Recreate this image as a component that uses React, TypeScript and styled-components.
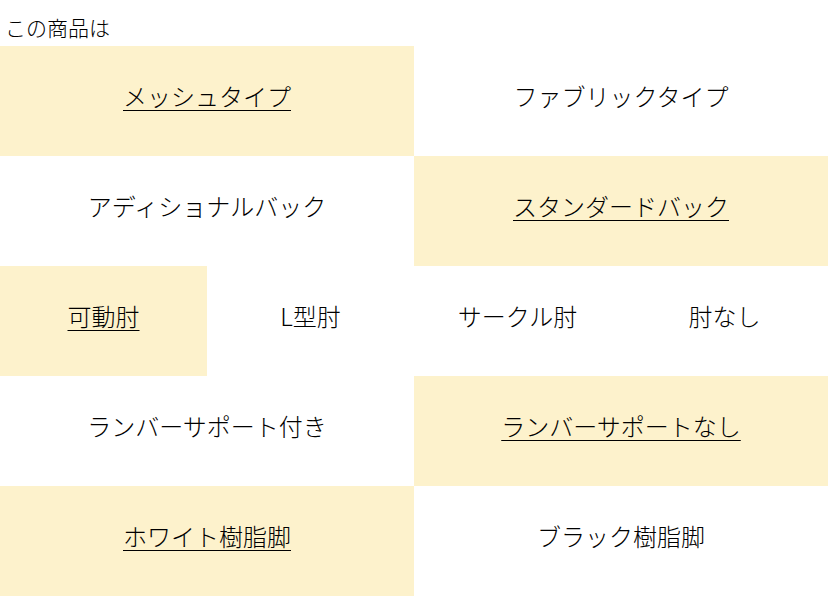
import styled, { createGlobalStyle } from 'styled-components';

const GlobalStyle = createGlobalStyle`
  html, body {
    margin: 0;
    padding: 0;
    background: #fff;
  }
  body {
    font-family: "Noto Sans CJK JP", "Noto Sans", sans-serif;
    color: #000;
  }
`;

const Heading = styled.div`
  height: 46px;
  padding: 8px 5px 0;
  display: flex;
  align-items: center;
  font-size: 21px;
  line-height: 1;
  font-weight: 300;
  box-sizing: border-box;
`;

const Options = styled.div`
  display: grid;
  grid-template-columns: repeat(4, 1fr);
  grid-auto-rows: 110px;
  width: 828px;
`;

const Option = styled.div<{ $span: number; $active?: boolean }>`
  grid-column: span ${p => p.$span};
  display: flex;
  align-items: center;
  justify-content: center;
  padding-bottom: 12px;
  box-sizing: border-box;
  font-size: 24px;
  font-weight: 300;
  background: ${p => (p.$active ? '#fdf2cc' : '#fff')};
  text-decoration: ${p => (p.$active ? 'underline' : 'none')};
  text-underline-offset: 4px;
  text-decoration-thickness: 1px;
  cursor: pointer;
`;

interface Choice {
  label: string;
  span: number;
  active?: boolean;
}

const rows: Choice[][] = [
  [
    { label: 'メッシュタイプ', span: 2, active: true },
    { label: 'ファブリックタイプ', span: 2 },
  ],
  [
    { label: 'アディショナルバック', span: 2 },
    { label: 'スタンダードバック', span: 2, active: true },
  ],
  [
    { label: '可動肘', span: 1, active: true },
    { label: 'L型肘', span: 1 },
    { label: 'サークル肘', span: 1 },
    { label: '肘なし', span: 1 },
  ],
  [
    { label: 'ランバーサポート付き', span: 2 },
    { label: 'ランバーサポートなし', span: 2, active: true },
  ],
  [
    { label: 'ホワイト樹脂脚', span: 2, active: true },
    { label: 'ブラック樹脂脚', span: 2 },
  ],
];

function App() {
  return (
    <>
      <GlobalStyle />
      <Heading>この商品は</Heading>
      <Options>
        {rows.flat().map(choice => (
          <Option key={choice.label} $span={choice.span} $active={choice.active}>
            {choice.label}
          </Option>
        ))}
      </Options>
    </>
  );
}

export default App;
